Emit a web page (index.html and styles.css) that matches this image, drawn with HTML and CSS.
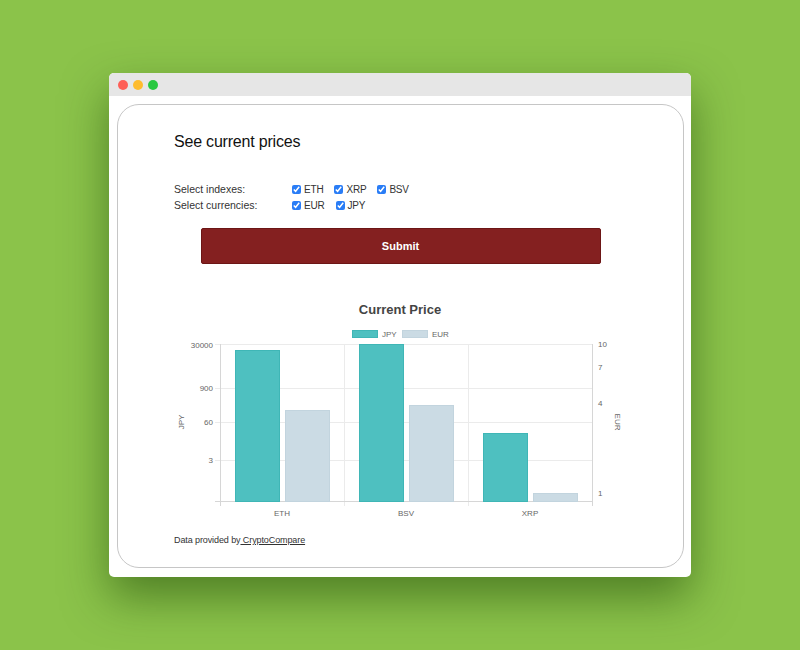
FILE: index.html
```html
<!DOCTYPE html>
<html>
<head>
    <meta charset="UTF-8">
    <title>Current prices</title>
    <link rel="stylesheet" href="styles.css">
</head>
<body>
    <div class="window">
        <div class="titlebar">
            <span class="dot red"></span>
            <span class="dot yellow"></span>
            <span class="dot green"></span>
        </div>

        <div class="page">
            <div class="card">
                <h1 class="heading">See current prices</h1>

                <div class="options">
                    <div class="row">
                        <span class="row-label">Select indexes:</span>
                        <label class="opt"><input type="checkbox" checked>ETH</label>
                        <label class="opt"><input type="checkbox" checked>XRP</label>
                        <label class="opt"><input type="checkbox" checked>BSV</label>
                    </div>
                    <div class="row">
                        <span class="row-label">Select currencies:</span>
                        <label class="opt"><input type="checkbox" checked>EUR</label>
                        <label class="opt"><input type="checkbox" checked>JPY</label>
                    </div>
                </div>

                <button class="submit">Submit</button>

                <!-- график: координаты во viewBox совпадают со страницей -->
                <svg class="chart" viewBox="160 295 480 230" width="480" height="230">
                    <text class="chart-title" x="400" y="314">Current Price</text>

                    <rect class="bar-jpy" x="352.5" y="330.5" width="25" height="7"/>
                    <text class="tick" x="382" y="337">JPY</text>
                    <rect class="bar-eur" x="402.5" y="330.5" width="25" height="7"/>
                    <text class="tick" x="432" y="337">EUR</text>

                    <!-- сетка -->
                    <line class="grid" x1="215" y1="344.5" x2="592" y2="344.5"/>
                    <line class="grid" x1="215" y1="388.5" x2="592" y2="388.5"/>
                    <line class="grid" x1="215" y1="422.5" x2="592" y2="422.5"/>
                    <line class="grid" x1="215" y1="460.5" x2="592" y2="460.5"/>
                    <line class="grid" x1="344.5" y1="344" x2="344.5" y2="506"/>
                    <line class="grid" x1="468.5" y1="344" x2="468.5" y2="506"/>
                    <line class="axis" x1="220.5" y1="344" x2="220.5" y2="506"/>
                    <line class="axis" x1="592.5" y1="344" x2="592.5" y2="506"/>
                    <line class="axis" x1="215" y1="501.5" x2="593" y2="501.5"/>

                    <!-- столбцы -->
                    <rect class="bar-jpy" x="235.5" y="350.5" width="44" height="151"/>
                    <rect class="bar-eur" x="285.5" y="410.5" width="44" height="91"/>
                    <rect class="bar-jpy" x="359.5" y="344.5" width="44" height="157"/>
                    <rect class="bar-eur" x="409.5" y="405.5" width="44" height="96"/>
                    <rect class="bar-jpy" x="483.5" y="433.5" width="44" height="68"/>
                    <rect class="bar-eur" x="533.5" y="493.5" width="44" height="8"/>

                    <!-- подписи осей -->
                    <text class="tick end" x="213" y="348">30000</text>
                    <text class="tick end" x="213" y="391">900</text>
                    <text class="tick end" x="213" y="425">60</text>
                    <text class="tick end" x="213" y="463">3</text>

                    <text class="tick" x="598" y="347">10</text>
                    <text class="tick" x="598" y="370">7</text>
                    <text class="tick" x="598" y="406">4</text>
                    <text class="tick" x="598" y="496">1</text>

                    <text class="tick mid" transform="translate(184 422) rotate(-90)">JPY</text>
                    <text class="tick mid" transform="translate(615 422) rotate(90)">EUR</text>

                    <text class="tick mid" x="282" y="516">ETH</text>
                    <text class="tick mid" x="406" y="516">BSV</text>
                    <text class="tick mid" x="530" y="516">XRP</text>
                </svg>

                <p class="credit">Data provided by<a href="#"> CryptoCompare</a></p>
            </div>
        </div>
    </div>
</body>
</html>
```

FILE: styles.css
```css
* {
    margin: 0;
    padding: 0;
    box-sizing: border-box;
}

body {
    background: #8bc34a;
    height: 100vh;
    display: flex;
    justify-content: center;
    align-items: center;
    font-family: 'Liberation Sans', Arial, sans-serif;
    color: #222;
    overflow: hidden;
}

.window {
    width: 582px;
    height: 504px;
    background: #fff;
    border-radius: 5px;
    box-shadow: 0 20px 45px rgba(20, 60, 0, 0.5);
    display: flex;
    flex-direction: column;
    overflow: hidden;
}

.titlebar {
    height: 23px;
    background: #e6e6e6;
    display: flex;
    align-items: center;
    gap: 5px;
    padding-left: 9px;
}

.dot {
    width: 10px;
    height: 10px;
    border-radius: 50%;
}

.red { background: #fe5f57; }
.yellow { background: #febc2e; }
.green { background: #28c840; }

.page {
    flex: 1;
    padding: 8px 7px 9px 8px;
    display: flex;
}

.card {
    flex: 1;
    min-width: 0;
    border: 1px solid #c6c6c6;
    border-radius: 22px;
    padding: 27px 56px 0;
}

.heading {
    font-size: 16px;
    line-height: 20px;
    font-weight: normal;
    letter-spacing: -0.2px;
    color: #111;
}

.options {
    margin-top: 29px;
    font-size: 10.5px;
    color: #333;
}

.row {
    display: flex;
    align-items: center;
    height: 16px;
}

.row-label {
    width: 118px;
}

.opt {
    display: flex;
    align-items: center;
    gap: 3px;
    margin-right: 11px;
    font-size: 10px;
    letter-spacing: -0.2px;
}

.opt input {
    width: 9px;
    height: 9px;
    margin: 0;
    accent-color: #2a7df6;
}

.submit {
    display: block;
    width: 400px;
    height: 36px;
    margin: 15px auto 0;
    background: #842020;
    border: 1px solid #6c1616;
    border-radius: 2px;
    color: #fff;
    font-family: inherit;
    font-size: 11px;
    font-weight: bold;
}

.chart {
    display: block;
    margin: 31px -14px 0;
    font-family: 'Liberation Sans', Arial, sans-serif;
}

.chart-title {
    font-size: 13px;
    font-weight: bold;
    fill: #444;
    text-anchor: middle;
}

.tick {
    font-size: 8px;
    fill: #666;
}

.tick.end { text-anchor: end; }
.tick.mid { text-anchor: middle; }

.grid {
    stroke: #ebebeb;
    stroke-width: 1;
}

.axis {
    stroke: #d6d6d6;
    stroke-width: 1;
}

.bar-jpy {
    fill: #4ec0c0;
    stroke: #3fb6b6;
    stroke-width: 1;
}

.bar-eur {
    fill: #cbdbe4;
    stroke: #c2d4de;
    stroke-width: 1;
}

.credit {
    margin-top: 9px;
    font-size: 9px;
    line-height: 12px;
    letter-spacing: -0.1px;
    color: #333;
}

.credit a {
    color: #333;
}
```
